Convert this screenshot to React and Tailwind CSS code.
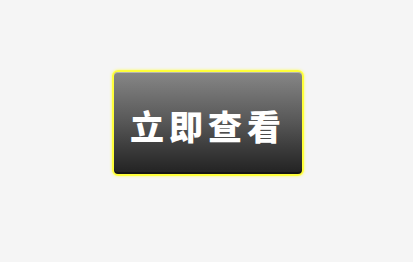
import React from "react";

const App = () => {
    return (
        <div className="min-h-[262px] w-full bg-[#f5f5f5] pl-[112px] pt-[70px]">
            <button
                className="flex h-[106px] w-[192px] items-center justify-center rounded-[6px] border-2 border-[#ffff3a] bg-gradient-to-b from-[#878787] via-[#565656] to-[#222222] pt-[6px] shadow-[0_0_3px_#ffff55,inset_0_1px_0_#b4b4b4,inset_0_-2px_0_#151515]"
                title="立即查看"
            >
                <span
                    className="text-[34px] font-extrabold leading-none tracking-[5px] text-white"
                    style={{ fontFamily: '"Noto Sans CJK SC", "Noto Sans", sans-serif' }}
                >
                    立即查看
                </span>
            </button>
        </div>
    );
};

export default App;
